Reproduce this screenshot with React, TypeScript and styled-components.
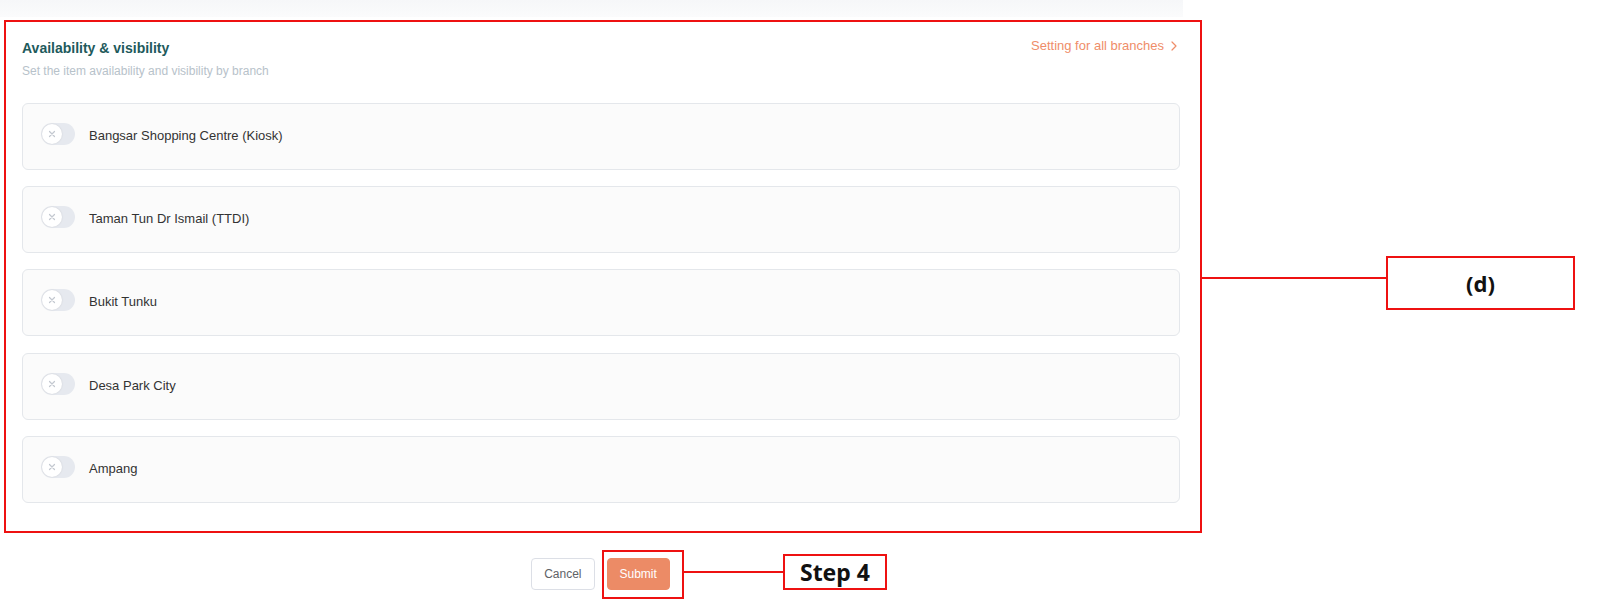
import React from "react";
import styled, { createGlobalStyle } from "styled-components";

const GlobalStyle = createGlobalStyle`
  html, body { margin: 0; padding: 0; background: #ffffff; }
  body { font-family: "Liberation Sans", Arial, sans-serif; }
  * { box-sizing: border-box; }
`;

const Page = styled.div`
  position: relative;
  width: 1600px;
  height: 600px;
  overflow: hidden;
`;

const Column = styled.div`
  width: 1201px;
  display: flex;
  flex-direction: column;
`;

const TopStrip = styled.div`
  width: 1183px;
  height: 17px;
  background: linear-gradient(#f6f7f9, #f9fafb 70%, #fbfbfc);
`;

const Section = styled.section`
  margin: 3px 0 0 4px;
  width: 1198px;
  border: 2px solid #ee1111;
  padding: 16px 20px 28px 16px;
  display: flex;
  flex-direction: column;
`;

const Header = styled.div`
  display: flex;
  justify-content: space-between;
  align-items: flex-start;
`;

const TitleBlock = styled.div`
  display: flex;
  flex-direction: column;
  gap: 4px;
`;

const Title = styled.h2`
  margin: 0;
  font-size: 14px;
  line-height: 20px;
  font-weight: 700;
  color: #1e5a5c;
`;

const Subtitle = styled.p`
  margin: 0;
  font-size: 12px;
  line-height: 18px;
  color: #b7c2ca;
`;

const Link = styled.a`
  display: flex;
  align-items: center;
  gap: 7px;
  margin: 1px 3px 0 0;
  font-size: 13px;
  line-height: 13px;
  color: #ef8d69;
  cursor: pointer;
  text-decoration: none;
`;

const List = styled.div`
  margin-top: 23px;
  display: flex;
  flex-direction: column;
  gap: 16.2px;
`;

const Card = styled.div`
  display: flex;
  align-items: flex-start;
  gap: 14px;
  padding: 19px 18px 22px;
  background: #fbfbfb;
  border: 1px solid #e4e7eb;
  border-radius: 6px;
`;

const Toggle = styled.span<{ $on?: boolean }>`
  position: relative;
  flex: none;
  width: 34px;
  height: 22px;
  border-radius: 11px;
  background: ${(p) => (p.$on ? "#ef8d69" : "#e6e9ef")};
`;

const Knob = styled.span`
  position: absolute;
  left: 1px;
  top: 1px;
  width: 20px;
  height: 20px;
  border-radius: 50%;
  background: #ffffff;
  box-shadow: 0 0 2px rgba(0, 0, 0, 0.12);
  display: flex;
  align-items: center;
  justify-content: center;
`;

const Label = styled.span`
  padding-top: 2px;
  font-size: 13px;
  line-height: 22px;
  color: #333333;
`;

const Footer = styled.div`
  margin-top: 25px;
  display: flex;
  justify-content: center;
  gap: 12px;
`;

const Button = styled.button<{ $primary?: boolean }>`
  height: 32px;
  padding: 0 12px;
  border-radius: 4px;
  font-family: "Liberation Sans", Arial, sans-serif;
  font-size: 12px;
  cursor: pointer;
  border: 1px solid ${(p) => (p.$primary ? "#ec8b66" : "#dcdfe6")};
  background: ${(p) => (p.$primary ? "#ec8b66" : "#ffffff")};
  color: ${(p) => (p.$primary ? "#ffffff" : "#606266")};
`;

const Callout = styled.div`
  position: absolute;
  border: 2px solid #ee1111;
  display: flex;
  align-items: center;
  justify-content: center;
  font-family: "Noto Sans", "DejaVu Sans", sans-serif;
  font-weight: 700;
  color: #111111;
`;

const Connector = styled.div`
  position: absolute;
  height: 2px;
  background: #ee1111;
`;

const Highlight = styled.div`
  position: absolute;
  border: 2px solid #ee1111;
`;

const branches = [
  "Bangsar Shopping Centre (Kiosk)",
  "Taman Tun Dr Ismail (TTDI)",
  "Bukit Tunku",
  "Desa Park City",
  "Ampang",
];

const CrossIcon = () => (
  <svg width="8" height="8" viewBox="0 0 8 8">
    <path d="M1.5 1.5 L6.5 6.5 M6.5 1.5 L1.5 6.5" stroke="#c3c8d0" strokeWidth="1.2" strokeLinecap="round" />
  </svg>
);

const Chevron = () => (
  <svg width="6" height="10" viewBox="0 0 6 10">
    <path d="M1 1 L5 5 L1 9" fill="none" stroke="#ef8d69" strokeWidth="1.2" strokeLinecap="round" strokeLinejoin="round" />
  </svg>
);

export default function App() {
  return (
    <Page>
      <GlobalStyle />
      <Column>
        <TopStrip />
        <Section>
          <Header>
            <TitleBlock>
              <Title>Availability &amp; visibility</Title>
              <Subtitle>Set the item availability and visibility by branch</Subtitle>
            </TitleBlock>
            <Link>
              Setting for all branches
              <Chevron />
            </Link>
          </Header>
          <List>
            {branches.map((b) => (
              <Card key={b}>
                <Toggle>
                  <Knob>
                    <CrossIcon />
                  </Knob>
                </Toggle>
                <Label>{b}</Label>
              </Card>
            ))}
          </List>
        </Section>
        <Footer>
          <Button>Cancel</Button>
          <Button $primary>Submit</Button>
        </Footer>
      </Column>

      <Connector style={{ left: 1202, top: 277, width: 186 }} />
      <Callout style={{ left: 1386, top: 256, width: 189, height: 54, fontSize: 22 }}>(d)</Callout>

      <Highlight style={{ left: 602, top: 550, width: 82, height: 49 }} />
      <Connector style={{ left: 684, top: 571, width: 100 }} />
      <Callout style={{ left: 783, top: 554, width: 104, height: 36, fontSize: 23 }}>Step 4</Callout>
    </Page>
  );
}
